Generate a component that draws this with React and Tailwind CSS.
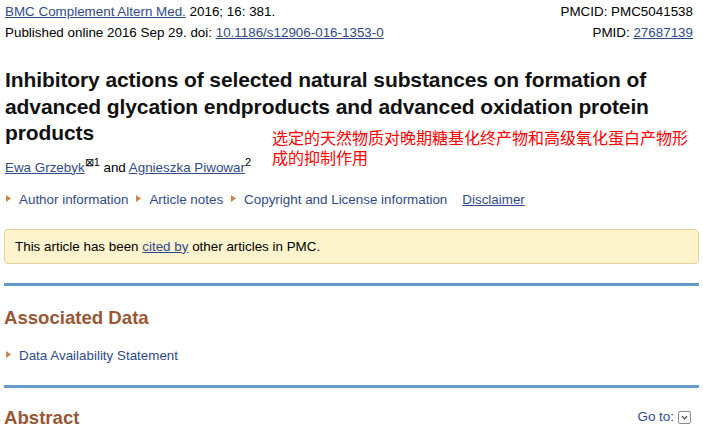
import React from "react";

const Tri = () => (
  <svg width="5" height="7" viewBox="0 0 5 7" className="inline-block mr-[8px] mb-[2px]">
    <path d="M0 0 L5 3.5 L0 7 Z" fill="#c8844c" />
  </svg>
);

export default function App() {
  return (
    <div className="relative w-[703px] h-[426px] overflow-hidden bg-white text-black" style={{ fontFamily: '"Liberation Sans", Arial, sans-serif' }}>
      <div className="px-[5px] pr-[10px] pt-[1px] text-[13.4px] leading-[21px]">
        <div className="flex justify-between">
          <div><a className="underline text-[#2f4a8b]">BMC Complement Altern Med.</a> 2016; 16: 381.</div>
          <div>PMCID: PMC5041538</div>
        </div>
        <div className="flex justify-between">
          <div>Published online 2016 Sep 29. doi: <a className="underline text-[#2f4a8b]">10.1186/s12906-016-1353-0</a></div>
          <div>PMID: <a className="underline text-[#2f4a8b]">27687139</a></div>
        </div>
      </div>
      <h1 className="mt-[24px] px-[5px] text-[21px] font-bold leading-[26.5px] tracking-[-0.1px] text-[#111]">
        Inhibitory actions of selected natural substances on formation of advanced glycation endproducts and advanced oxidation protein products
      </h1>
      <div className="mt-[12px] px-[5px] text-[13.4px] leading-[18px]">
        <a className="underline text-[#2f4a8b]">Ewa Grzebyk</a>
        <sup className="text-[11px]">⊠1</sup> and <a className="underline text-[#2f4a8b]">Agnieszka Piwowar</a>
        <sup className="text-[11px]">2</sup>
      </div>
      <div className="mt-[14px] px-[6px] text-[13.4px] leading-[18px] text-[#2f4a8b] flex items-center">
        <span className="mr-[8px]"><Tri />Author information</span>
        <span className="mr-[8px]"><Tri />Article notes</span>
        <span className="mr-[15px]"><Tri />Copyright and License information</span>
        <a className="underline">Disclaimer</a>
      </div>
      <div className="mx-[4px] mt-[20px] rounded-[4px] border border-[#e8cfa0] bg-[#fdf3cd] px-[10px] py-[7px] text-[13.4px] leading-[19px]">
        This article has been <a className="underline text-[#2f4a8b]">cited by</a> other articles in PMC.
      </div>
      <div className="mx-[4px] mt-[19px] h-[3px] bg-[#6699cc]" />
      <h2 className="mt-[21px] px-[4px] text-[18.6px] font-bold leading-[22px] text-[#985735]">Associated Data</h2>
      <div className="mt-[18px] px-[6px] text-[13.4px] leading-[17px] text-[#2f4a8b]"><Tri />Data Availability Statement</div>
      <div className="mx-[4px] mt-[21px] h-[3px] bg-[#6699cc]" />
      <div className="mt-[19px] px-[4px] pr-[12px] flex justify-between items-center">
        <h2 className="text-[18.6px] font-bold leading-[22px] text-[#985735]">Abstract</h2>
        <div className="flex items-center text-[13.4px] text-[#2f4a8b]">
          Go to:
          <span className="ml-[4px] inline-flex items-center justify-center w-[13px] h-[13px] rounded-[2px] border border-[#888]">
            <svg width="9" height="9" viewBox="0 0 9 9"><path d="M2 3 L4.5 6 L7 3" fill="none" stroke="#555" strokeWidth="1.2" /></svg>
          </span>
        </div>
      </div>
      <div className="absolute left-[272px] top-[127px] whitespace-nowrap text-[16px] leading-[20px] text-[#ff0000]" style={{ fontFamily: '"Noto Sans CJK SC", sans-serif' }}>
        选定的天然物质对晚期糖基化终产物和高级氧化蛋白产物形<br />成的抑制作用
      </div>
    </div>
  );
}
